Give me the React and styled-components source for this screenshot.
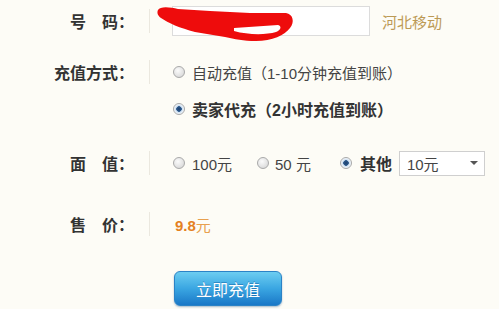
import React from "react";
import styled, { createGlobalStyle } from "styled-components";

const GlobalStyle = createGlobalStyle`
    html, body {
        margin: 0;
        padding: 0;
        background: #fdfcf6;
    }
    body {
        font-family: "Liberation Sans", "Noto Sans CJK SC", sans-serif;
        color: #444;
    }
`;

const Form = styled.div`
    width: 499px;
    height: 309px;
    display: flex;
    flex-direction: column;
    overflow: hidden;
`;

const Row = styled.div`
    display: flex;
    align-items: center;
    height: ${(p) => p.$h || 42}px;
    margin-top: ${(p) => p.$mt || 0}px;
`;

const Label = styled.div`
    width: 134px;
    flex-shrink: 0;
    text-align: right;
    font-size: 16px;
    font-weight: bold;
    color: #333;
    white-space: pre;
`;

const Divider = styled.div`
    width: 1px;
    height: 24px;
    margin-left: 15px;
    background: ${(p) => (p.$hidden ? "transparent" : "#ebe8df")};
`;

const Content = styled.div`
    display: flex;
    align-items: center;
    margin-left: 22px;
    position: relative;
`;

const PhoneInput = styled.div`
    width: 198px;
    height: 30px;
    background: #fff;
    border: 1px solid #dcdcdc;
    box-sizing: border-box;
`;

/* redaction mark drawn over the phone number */
const Scribble = styled.svg`
    position: absolute;
    left: -22px;
    top: -6px;
    pointer-events: none;
`;

const Carrier = styled.span`
    margin-left: 12px;
    font-size: 15px;
    color: #bc9a55;
`;

const Radio = styled.span`
    width: 12px;
    height: 12px;
    box-sizing: border-box;
    border-radius: 50%;
    border: 1px solid #a9a9a9;
    margin-left: ${(p) => p.$ml || 0}px;
    flex-shrink: 0;
    background: ${(p) =>
        p.$checked
            ? "radial-gradient(circle, #1d3f6e 0, #2d5a8c 2.5px, #c9dcef 3px, #f4f8fc 5px)"
            : "radial-gradient(circle at 40% 35%, #fbfbfb 0, #dedede 70%, #cfcfcf 100%)"};
`;

const Option = styled.span`
    margin-left: ${(p) => p.$ml || 7}px;
    font-size: ${(p) => (p.$bold ? 16 : 15)}px;
    font-weight: ${(p) => (p.$bold ? "bold" : "normal")};
    color: ${(p) => (p.$bold ? "#333" : "#444")};
    white-space: nowrap;
`;

const Select = styled.div`
    width: 86px;
    height: 25px;
    box-sizing: border-box;
    margin-left: 7px;
    border: 1px solid #cfcfcf;
    background: #fff;
    display: flex;
    align-items: center;
    justify-content: space-between;
    padding: 0 6px 0 7px;
    font-size: 15px;
    color: #444;
`;

const Caret = styled.span`
    width: 0;
    height: 0;
    border-left: 4px solid transparent;
    border-right: 4px solid transparent;
    border-top: 4px solid #555;
`;

const Price = styled.span`
    margin-left: 3px;
    font-size: 15px;
    color: #e8a04e;
`;

const PriceNumber = styled.span`
    font-weight: bold;
    color: #e4801f;
`;

const SubmitButton = styled.button`
    margin-left: 174px;
    margin-top: 26px;
    width: 108px;
    height: 35px;
    border: 1px solid #2b83c6;
    border-radius: 6px;
    background: linear-gradient(#6ccdf1, #3aa6e2 50%, #1a78c7);
    box-shadow: 0 1px 2px rgba(0, 60, 120, 0.35);
    color: #fff;
    font-family: "Noto Sans CJK SC", sans-serif;
    font-size: 16px;
    text-shadow: 0 -1px 0 rgba(0, 70, 140, 0.4);
    padding: 0;
    cursor: pointer;
`;

export default function App() {
    return (
        <>
            <GlobalStyle />
            <Form>
                <Row $h={42}>
                    <Label>号　码：</Label>
                    <Divider />
                    <Content>
                        <PhoneInput />
                        <Scribble width="150" height="45" viewBox="150 0 150 45">
                            <path
                                fillRule="evenodd"
                                fill="#ee0c0c"
                                d="M158 10 C160 6 170 7 178 9 L210 11 L250 13 L286 13 C293 14 295 22 290 28 C285 35 272 41 256 41 C243 41 235 39 225 37 L195 32 C180 28 168 23 161 18 C157 15 157 12 158 10 Z M234 28 L278 25 C282 26 281 30 276 32 C266 35 248 35 234 31 Z"
                            />
                        </Scribble>
                        <Carrier>河北移动</Carrier>
                    </Content>
                </Row>
                <Row $h={42} $mt={9}>
                    <Label>充值方式：</Label>
                    <Divider />
                    <Content>
                        <Radio $ml={1} />
                        <Option>自动充值（1-10分钟充值到账）</Option>
                    </Content>
                </Row>
                <Row $h={32}>
                    <Label />
                    <Divider $hidden />
                    <Content>
                        <Radio $ml={1} $checked />
                        <Option $bold>卖家代充（2小时充值到账）</Option>
                    </Content>
                </Row>
                <Row $h={42} $mt={17}>
                    <Label>面　值：</Label>
                    <Divider />
                    <Content>
                        <Radio $ml={1} />
                        <Option>100元</Option>
                        <Radio $ml={25} />
                        <Option $ml={6}>50 元</Option>
                        <Radio $ml={29} $checked />
                        <Option $ml={8} $bold>其他</Option>
                        <Select>
                            <span>10元</span>
                            <Caret />
                        </Select>
                    </Content>
                </Row>
                <Row $h={42} $mt={19}>
                    <Label>售　价：</Label>
                    <Divider />
                    <Content>
                        <Price>
                            <PriceNumber>9.8</PriceNumber>元
                        </Price>
                    </Content>
                </Row>
                <SubmitButton>立即充值</SubmitButton>
            </Form>
        </>
    );
}
